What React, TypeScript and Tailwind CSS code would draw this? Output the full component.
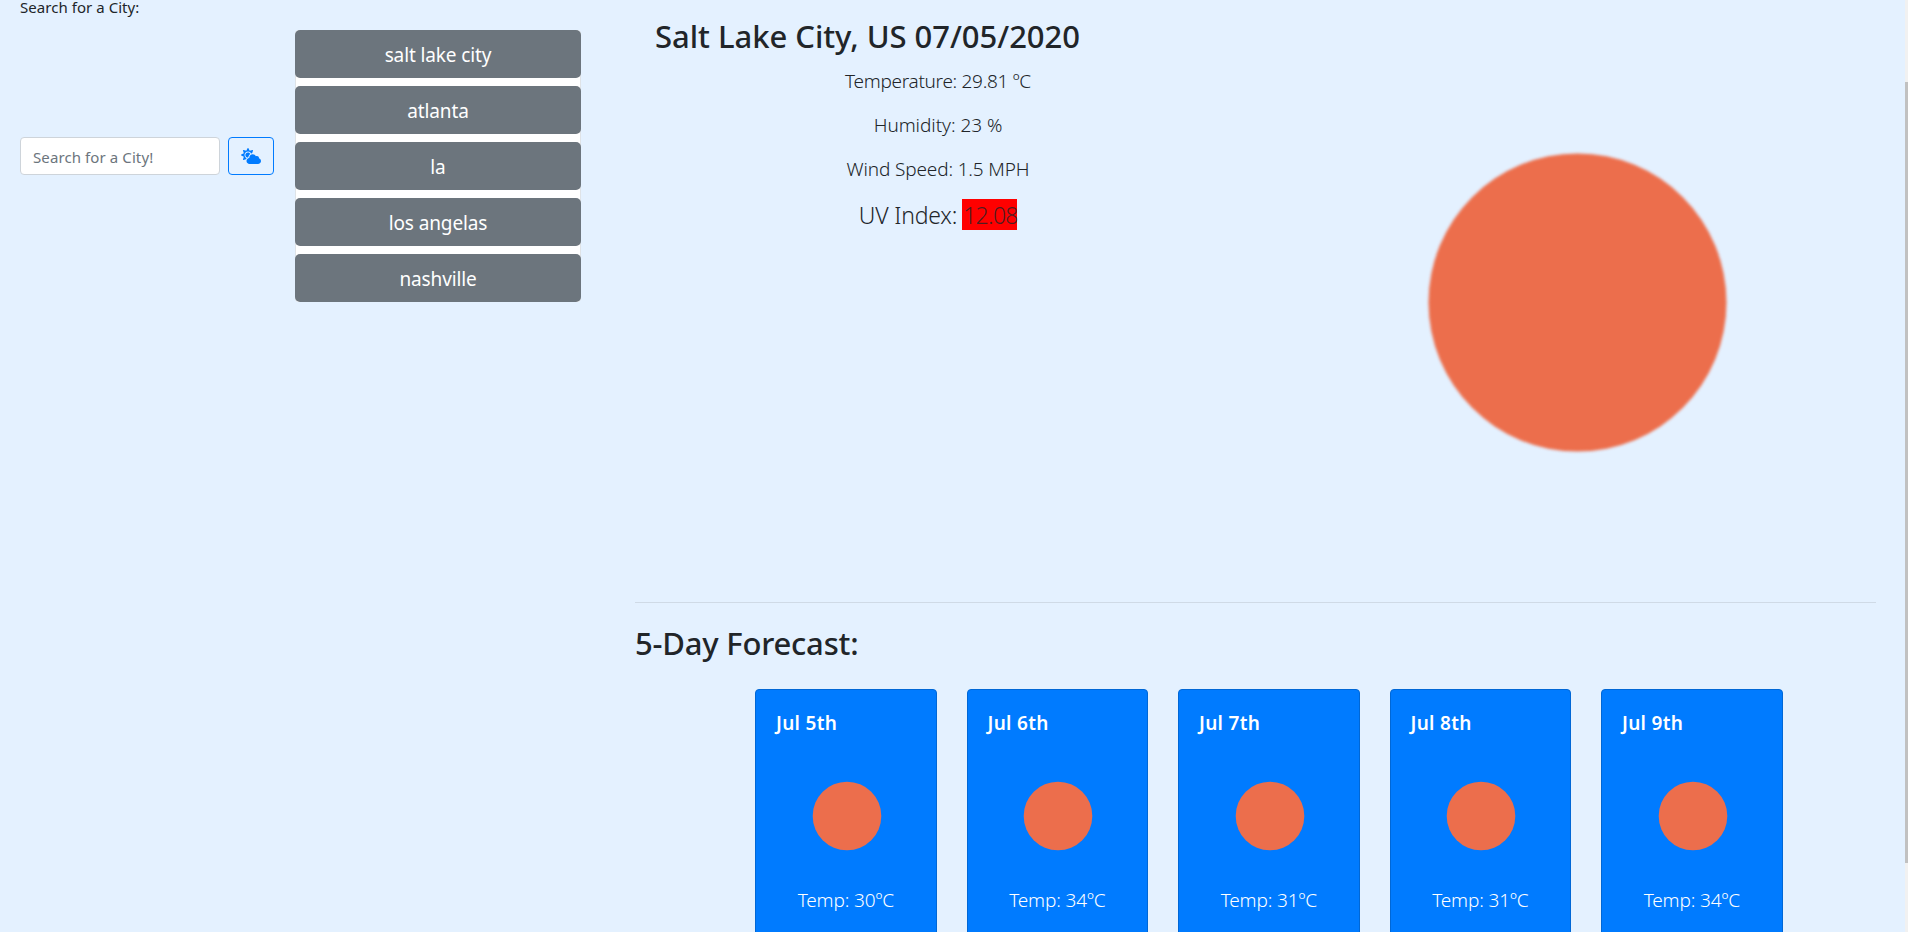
import React from "react";
import { FaCloudSun } from "react-icons/fa";

const cities = ["salt lake city", "atlanta", "la", "los angelas", "nashville"];

const forecast = [
  { day: "Jul 5th", temp: "30" },
  { day: "Jul 6th", temp: "34" },
  { day: "Jul 7th", temp: "31" },
  { day: "Jul 8th", temp: "31" },
  { day: "Jul 9th", temp: "34" },
];

function SearchForm() {
  return (
    <form className="w-[254px] shrink-0" onSubmit={(e) => e.preventDefault()}>
      <label className="-mt-[5px] block h-6 text-[15px] leading-6 tracking-[0.05px] whitespace-nowrap">Search for a City:</label>
      <div className="mt-[118px] flex gap-2">
        <input
          className="h-[38px] w-[200px] rounded border border-[#ced4da] bg-white px-3 pt-0.5 text-[15px] tracking-[0.1px] placeholder:text-[#6c757d] placeholder:opacity-100"
          placeholder="Search for a City!"
        />
        <button className="flex h-[38px] w-[46px] items-center justify-center rounded border border-[#007bff] text-[#007bff]">
          <FaCloudSun size={20} />
        </button>
      </div>
    </form>
  );
}

function History() {
  return (
    <div className="ml-[21px] mt-[30px] h-[272px] w-[286px] shrink-0 rounded border-x border-[#dfe3e7] bg-white">
      <div className="-mx-px flex flex-col gap-2">
        {cities.map((c) => (
          <button key={c} className="h-12 rounded-[5px] bg-[#6c757d] pt-0.5 text-[19px] tracking-[-0.12px] text-white">
            {c}
          </button>
        ))}
      </div>
    </div>
  );
}

function Current() {
  return (
    <section className="flex h-[602px] pl-[20px]">
      <div className="w-[565px] pt-[17px]">
        <h2 className="h-[46px] text-[31px] leading-[39px] font-medium tracking-[-0.03px] whitespace-nowrap">
          Salt Lake City, US 07/05/2020
        </h2>
        <div className="ml-px flex flex-col items-center font-[340]">
          <p className="mt-[3px] h-[44px] text-[19px] leading-[30px] tracking-[-0.3px]">Temperature: 29.81 ºC</p>
          <p className="h-[44px] text-[19px] leading-[30px] tracking-[-0.05px]">Humidity: 23 %</p>
          <p className="h-[43px] text-[19px] leading-[30px] tracking-[-0.15px]">Wind Speed: 1.5 MPH</p>
          <p className="-mt-px flex h-[36px] items-center text-[23px]">
            <span className="mt-0.5 tracking-[-0.2px]">UV Index:</span>
            <span className="ml-[5px] flex h-[31px] w-[55px] items-center bg-[#ff0000] pt-0.5 pl-px tracking-[-0.7px] text-[#212529]/80">12.08</span>
          </p>
        </div>
      </div>
      <svg className="ml-[207px] mt-[152px] h-[301px] w-[301px] blur-[1.4px]" viewBox="0 0 301 301">
        <circle cx="150.5" cy="150.5" r="149" fill="#ec6e4c" />
      </svg>
    </section>
  );
}

function Forecast() {
  return (
    <section className="border-t border-[#cfdae6]">
      <h2 className="mt-[21px] h-[65px] text-[31px] leading-[39px] font-medium tracking-[-0.2px]">5-Day Forecast:</h2>
      <div className="ml-[120px] flex gap-[30px]">
        {forecast.map((f) => (
          <article key={f.day} className="flex h-[300px] w-[181.5px] shrink-0 flex-col items-center rounded-t border border-[#0067d6] bg-[#007bff] text-white">
            <h5 className="mt-[21px] h-6 self-start pl-5 text-[19px] leading-6 font-semibold tracking-[0.3px]">{f.day}</h5>
            <svg className="mt-[46px] ml-[2px] h-[70px] w-[70px]" viewBox="0 0 70 70">
              <circle cx="35" cy="35" r="34.3" fill="#ec6e4c" />
            </svg>
            <p className="mt-[34px] text-[19px] leading-[30px] font-[340] tracking-[-0.15px]">Temp: {f.temp}ºC</p>
          </article>
        ))}
      </div>
    </section>
  );
}

export default function App() {
  return (
    <div className="flex h-[932px] w-full overflow-hidden bg-[#e4f1ff] font-['Noto_Sans','Open_Sans',sans-serif] text-[#212529]">
      <div className="flex w-[615px] shrink-0 pl-5">
        <SearchForm />
        <History />
      </div>
      <main className="ml-5 w-[1241px] shrink-0">
        <Current />
        <Forecast />
      </main>
      <div className="ml-auto flex w-[3px] shrink-0 flex-col bg-[#f1f1f1]">
        <div className="mt-[82px] h-[781px] bg-[#c1c1c1]" />
      </div>
    </div>
  );
}
